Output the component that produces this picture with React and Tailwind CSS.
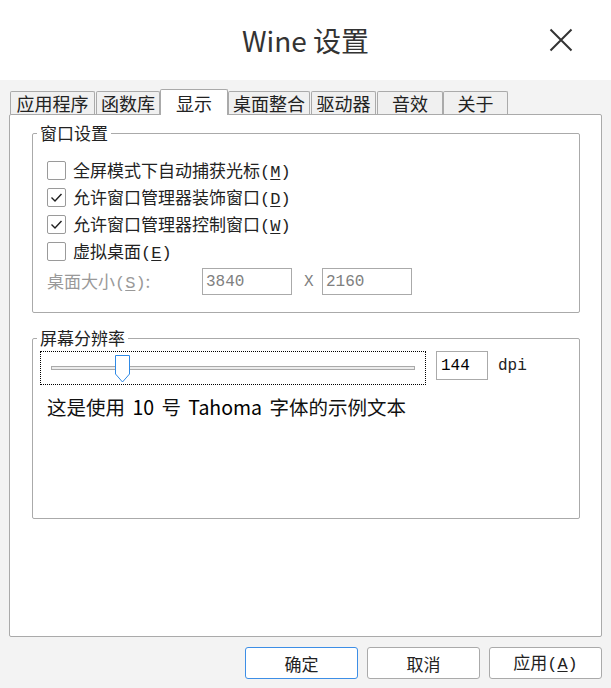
import React from 'react';

const tabs = [
  { label: '应用程序', w: 'w-[85px]', ml: 'ml-[1px]' },
  { label: '函数库', w: 'w-[64px]', ml: 'ml-[1px]' },
  { label: '显示', w: 'w-[68px]', ml: 'ml-0', active: true },
  { label: '桌面整合', w: 'w-[82px]', ml: 'ml-0' },
  { label: '驱动器', w: 'w-[65px]', ml: 'ml-[1px]' },
  { label: '音效', w: 'w-[66px]', ml: 'ml-[1px]' },
  { label: '关于', w: 'w-[65px]', ml: 'ml-0' },
];

const options = [
  { label: '全屏模式下自动捕获光标', key: 'M', checked: false },
  { label: '允许窗口管理器装饰窗口', key: 'D', checked: true },
  { label: '允许窗口管理器控制窗口', key: 'W', checked: true },
  { label: '虚拟桌面', key: 'E', checked: false },
];

function Key({ k }) {
  return (
    <span className="font-['Liberation_Mono',monospace]">
      (<span className="underline underline-offset-2">{k}</span>)
    </span>
  );
}

function Checkbox({ checked }) {
  return (
    <div className="w-[19px] h-[19px] shrink-0 border border-[#9a9a9a] rounded-[2px] bg-white flex items-center justify-center">
      {checked && (
        <svg width="15" height="15" viewBox="0 0 15 15" fill="none">
          <path d="M2.5 7.5 L6 11 L12.5 4" stroke="#1f1f1f" strokeWidth="1.4" />
        </svg>
      )}
    </div>
  );
}

export default function App() {
  return (
    <div className="w-[611px] h-[688px] flex flex-col bg-[#f3f3f3] font-['Noto_Sans_CJK_SC','Noto_Sans',sans-serif] text-[#222]">
      {/* Title bar */}
      <div className="h-[80px] shrink-0 bg-white grid grid-cols-[1fr_auto_1fr] items-center">
        <div />
        <div className="text-[28px] leading-[40px] text-[#333]">Wine 设置</div>
        <div className="flex justify-end pr-[38px]">
          <svg width="24" height="24" viewBox="0 0 24 24" fill="none">
            <path d="M1.5 1.5 L22.5 22.5 M22.5 1.5 L1.5 22.5" stroke="#333" strokeWidth="2" />
          </svg>
        </div>
      </div>

      <div className="flex-1 flex flex-col px-[9px] pt-[9px]">
        {/* Tabs */}
        <div className="flex items-end h-[25px]">
          {tabs.map((t) =>
            t.active ? (
              <div
                key={t.label}
                className={`${t.w} ${t.ml} h-[26px] -mb-px relative z-10 bg-white border border-b-0 border-[#aaa] rounded-t-[2px] flex items-center justify-center text-[18px] leading-none`}
              >
                {t.label}
              </div>
            ) : (
              <div
                key={t.label}
                className={`${t.w} ${t.ml} h-[23px] bg-[#f0f0f0] border border-b-0 border-[#aaa] rounded-t-[2px] flex items-center justify-center text-[18px] leading-none`}
              >
                {t.label}
              </div>
            )
          )}
        </div>

        {/* Panel */}
        <div className="h-[523px] shrink-0 border border-[#aaa] rounded-[2px] bg-white">
          <fieldset className="ml-[22px] mt-[6px] w-[548px] border border-[#aaa] rounded-[2px] pt-[12px] pb-[17px]">
            <legend className="ml-[4px] px-[3px] text-[17px] leading-[24px]">窗口设置</legend>
            <div className="flex flex-col pl-[14px]">
              {options.map((o) => (
                <div key={o.key} className="h-[27px] flex items-center">
                  <Checkbox checked={o.checked} />
                  <span className="ml-[7px] text-[17px] leading-none">
                    {o.label}
                    <Key k={o.key} />
                  </span>
                </div>
              ))}
              <div className="mt-[3px] h-[27px] flex items-center text-[17px]">
                <span className="w-[155px] text-[#999] leading-none">
                  桌面大小<Key k="S" />:
                </span>
                <div className="w-[90px] h-[27px] border border-[#aaa] flex items-center pl-[3px] font-['Liberation_Mono',monospace] text-[16px] text-[#808080]">
                  3840
                </div>
                <span className="ml-[12px] w-[9px] font-['Liberation_Mono',monospace] text-[16px] text-[#808080]">X</span>
                <div className="ml-[9px] w-[90px] h-[27px] border border-[#aaa] flex items-center pl-[3px] font-['Liberation_Mono',monospace] text-[16px] text-[#808080]">
                  2160
                </div>
              </div>
            </div>
          </fieldset>

          <fieldset className="ml-[22px] mt-[13px] w-[548px] border border-[#aaa] rounded-[2px] pt-[1px] pb-[99px]">
            <legend className="ml-[4px] px-[3px] text-[17px] leading-[24px]">屏幕分辨率</legend>
            <div className="flex items-start pl-[7px]">
              <div className="w-[386px] h-[34px] border border-dotted border-black flex items-center px-[10px]">
                <div className="relative w-full h-[4px] border border-[#aaa] bg-[#ececec]">
                  <svg className="absolute left-[63px] -top-[12px]" width="15" height="28" viewBox="0 0 15 28" fill="none">
                    <path d="M0.5 0.5 H14.5 V19 L7.5 27 L0.5 19 Z" fill="white" stroke="#2f8ae6" />
                  </svg>
                </div>
              </div>
              <div className="ml-[10px] w-[52px] h-[29px] border border-[#aaa] flex items-center pl-[4px] font-['Liberation_Mono',monospace] text-[16px] text-black">
                144
              </div>
              <div className="ml-[10px] h-[29px] flex items-center font-['Liberation_Mono',monospace] text-[16px]">dpi</div>
            </div>
            <div className="mt-[10px] pl-[14px] text-[19.5px] leading-[24px] text-[#111] [word-spacing:3px]">
              这是使用 <span className="text-black">10</span> 号 <span className="text-black">Tahoma</span> 字体的示例文本
            </div>
          </fieldset>
        </div>

        {/* Buttons */}
        <div className="mt-[10px] flex justify-end gap-[9px]">
          <button className="w-[113px] h-[32px] bg-white border border-[#3d8ee6] rounded-[3px] text-[17px] leading-none">确定</button>
          <button className="w-[113px] h-[32px] bg-white border border-[#aaa] rounded-[3px] text-[17px] leading-none">取消</button>
          <button className="w-[113px] h-[32px] bg-white border border-[#aaa] rounded-[3px] text-[17px] leading-none">
            应用<Key k="A" />
          </button>
        </div>
      </div>
    </div>
  );
}
